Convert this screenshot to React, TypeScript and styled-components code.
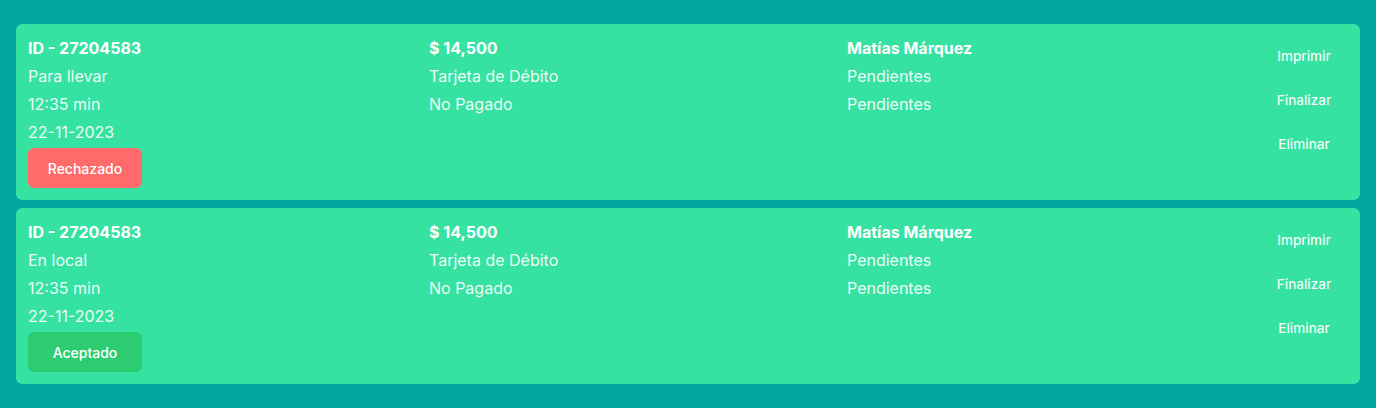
import React from "react";
import styled, { createGlobalStyle } from "styled-components";

const GlobalStyle = createGlobalStyle`
  html, body {
    margin: 0;
    padding: 0;
    background: #00a69c;
  }
  body {
    font-family: Inter, "Noto Sans", sans-serif;
    color: #ffffff;
  }
`;

const Page = styled.div`
  display: flex;
  flex-direction: column;
  gap: 8px;
  padding: 24px 16px;
`;

const Card = styled.div`
  display: grid;
  grid-template-columns: 401px 418px 1fr 88px;
  background: #36e2a2;
  border-radius: 6px;
  padding: 10px 12px 12px;
`;

const Column = styled.div`
  display: flex;
  flex-direction: column;
  align-items: flex-start;
`;

const Line = styled.div<{ $bold?: boolean }>`
  font-size: 16px;
  line-height: 28px;
  font-weight: ${(p) => (p.$bold ? 700 : 400)};
  color: ${(p) => (p.$bold ? "#ffffff" : "rgba(255,255,255,0.93)")};
  white-space: nowrap;
`;

const Status = styled.div<{ $tone: "rejected" | "accepted" }>`
  margin-top: 2px;
  width: 114px;
  height: 40px;
  border-radius: 6px;
  display: flex;
  align-items: center;
  justify-content: center;
  font-size: 14px;
  font-weight: 500;
  color: #ffffff;
  background: ${(p) => (p.$tone === "rejected" ? "#ff6b6b" : "#2ecc71")};
`;

const Actions = styled.div`
  display: flex;
  flex-direction: column;
`;

const ActionButton = styled.button`
  height: 44px;
  width: 88px;
  border: none;
  background: transparent;
  color: rgba(255, 255, 255, 0.95);
  font-family: Inter, "Noto Sans", sans-serif;
  font-size: 13.5px;
  font-weight: 500;
  text-align: center;
  padding: 0;
  cursor: pointer;
`;

type Order = {
  id: string;
  type: string;
  time: string;
  date: string;
  status: "rejected" | "accepted";
  statusLabel: string;
  amount: string;
  payment: string;
  paid: string;
  client: string;
  s1: string;
  s2: string;
};

const orders: Order[] = [
  {
    id: "ID - 27204583",
    type: "Para llevar",
    time: "12:35 min",
    date: "22-11-2023",
    status: "rejected",
    statusLabel: "Rechazado",
    amount: "$ 14,500",
    payment: "Tarjeta de Débito",
    paid: "No Pagado",
    client: "Matías Márquez",
    s1: "Pendientes",
    s2: "Pendientes",
  },
  {
    id: "ID - 27204583",
    type: "En local",
    time: "12:35 min",
    date: "22-11-2023",
    status: "accepted",
    statusLabel: "Aceptado",
    amount: "$ 14,500",
    payment: "Tarjeta de Débito",
    paid: "No Pagado",
    client: "Matías Márquez",
    s1: "Pendientes",
    s2: "Pendientes",
  },
];

export default function App() {
  return (
    <>
      <GlobalStyle />
      <Page>
        {orders.map((o, i) => (
          <Card key={i}>
            <Column>
              <Line $bold>{o.id}</Line>
              <Line>{o.type}</Line>
              <Line>{o.time}</Line>
              <Line>{o.date}</Line>
              <Status $tone={o.status}>{o.statusLabel}</Status>
            </Column>
            <Column>
              <Line $bold>{o.amount}</Line>
              <Line>{o.payment}</Line>
              <Line>{o.paid}</Line>
            </Column>
            <Column>
              <Line $bold>{o.client}</Line>
              <Line>{o.s1}</Line>
              <Line>{o.s2}</Line>
            </Column>
            <Actions>
              <ActionButton>Imprimir</ActionButton>
              <ActionButton>Finalizar</ActionButton>
              <ActionButton>Eliminar</ActionButton>
            </Actions>
          </Card>
        ))}
      </Page>
    </>
  );
}
